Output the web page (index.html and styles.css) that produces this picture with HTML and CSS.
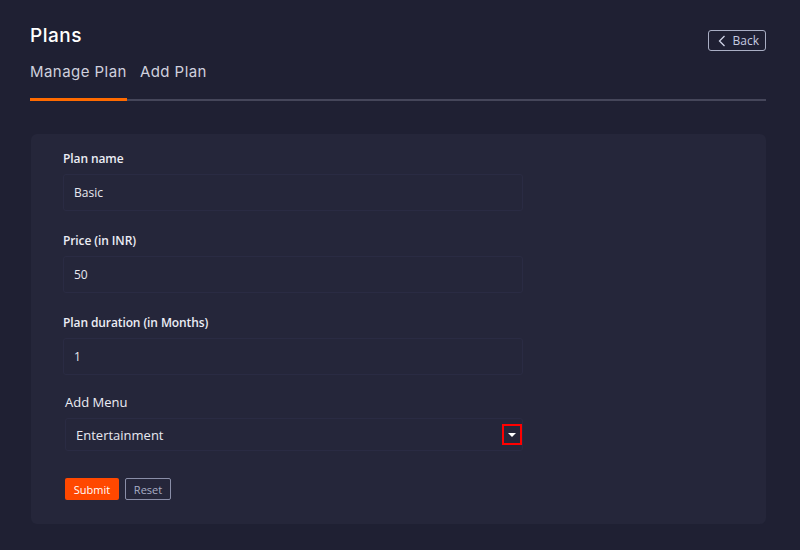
FILE: index.html
```html
<!DOCTYPE html>
<html lang="en">

<head>
    <meta charset="UTF-8">
    <meta name="viewport" content="width=device-width, initial-scale=1.0">
    <title>Plans</title>
    <link rel="stylesheet" href="styles.css">
</head>

<body>
    <div class="page">
        <div class="page-head">
            <h1>Plans</h1>
            <button class="back-btn">
                <svg width="8" height="12" viewBox="0 0 8 12"><path d="M6.5 1 L1.5 6 L6.5 11" fill="none" stroke="#cfd3e6" stroke-width="1.3"/></svg>
                Back
            </button>
        </div>

        <div class="tabs">
            <span class="tab active">Manage Plan</span>
            <span class="tab">Add Plan</span>
        </div>

        <div class="card">
            <div class="field">
                <label>Plan name</label>
                <div class="input">Basic</div>
            </div>
            <div class="field">
                <label>Price (in INR)</label>
                <div class="input">50</div>
            </div>
            <div class="field duration-field">
                <label>Plan duration (in Months)</label>
                <div class="input">1</div>
            </div>
            <div class="field menu-field">
                <label>Add Menu</label>
                <div class="input select">
                    Entertainment
                    <span class="caret-box"><span class="caret"></span></span>
                </div>
            </div>
            <div class="actions">
                <button class="btn-submit">Submit</button>
                <button class="btn-reset">Reset</button>
            </div>
        </div>
    </div>
</body>

</html>
```

FILE: styles.css
```css
body {
    margin: 0;
    background-color: #1f2033;
    color: #fff;
    font-family: "Open Sans", Lato, sans-serif;
}

.page {
    padding: 24px 34px 0 30px;
}

.page-head {
    display: flex;
    justify-content: space-between;
    align-items: flex-start;
}

h1 {
    margin: 0;
    font-family: Inter, "Noto Sans", sans-serif;
    font-size: 19px;
    font-weight: 500;
    letter-spacing: 0.5px;
    line-height: 24px;
}

.back-btn {
    margin-top: 6px;
    display: flex;
    align-items: center;
    gap: 7px;
    height: 21px;
    padding: 0 6px 0 9px;
    background: transparent;
    border: 1px solid #a9aec4;
    border-radius: 3px;
    color: #c7cbe0;
    font-family: "Open Sans", sans-serif;
    font-size: 12px;
}

.tabs {
    display: flex;
    gap: 13px;
    margin-top: 10px;
    border-bottom: 2px solid #45465a;
    height: 38px;
}

.tab {
    font-family: Inter, "Noto Sans", sans-serif;
    font-size: 15px;
    letter-spacing: 0.45px;
    color: #cfd0de;
    line-height: 21px;
}

.tab.active {
    border-bottom: 3px solid #ff6a00;
    margin-bottom: -2px;
}

.card {
    margin: 33px 0 0 1px;
    background-color: #25263a;
    border-radius: 6px;
    padding: 16px 32px 23px 32px;
    height: 351px;
}

.field {
    width: 460px;
    margin-bottom: 21px;
}

.field label {
    display: block;
    font-size: 12px;
    font-weight: 600;
    letter-spacing: -0.1px;
    color: #ecedf5;
    line-height: 17px;
    margin-bottom: 7px;
}

.input {
    height: 35px;
    border: 1px solid #2a2b43;
    border-radius: 3px;
    padding: 0 10px;
    display: flex;
    align-items: center;
    font-size: 12px;
    color: #e8e8f0;
}

.duration-field {
    margin-bottom: 19px;
}

.menu-field {
    margin-left: 2px;
    width: 458px;
    margin-bottom: 0;
}

.menu-field label {
    font-size: 13px;
    font-weight: 500;
    letter-spacing: 0;
}

.select {
    height: 31px;
    font-size: 13px;
    justify-content: space-between;
    padding-right: 0;
}

.caret-box {
    width: 16px;
    height: 17px;
    border: 2px solid #ff0000;
    display: flex;
    align-items: center;
    justify-content: center;
}

.caret {
    width: 0;
    height: 0;
    border-left: 4px solid transparent;
    border-right: 4px solid transparent;
    border-top: 4px solid #fff;
    margin-top: 1px;
}

.actions {
    display: flex;
    gap: 6px;
    margin: 27px 0 0 2px;
}

.btn-submit,
.btn-reset {
    height: 22px;
    border-radius: 2px;
    font-family: "Open Sans", sans-serif;
    font-size: 11px;
}

.btn-submit {
    width: 54px;
    background: #ff4800;
    border: none;
    color: #fff;
}

.btn-reset {
    width: 46px;
    background: transparent;
    border: 1px solid #8a8ea8;
    color: #a9aec6;
}
```
